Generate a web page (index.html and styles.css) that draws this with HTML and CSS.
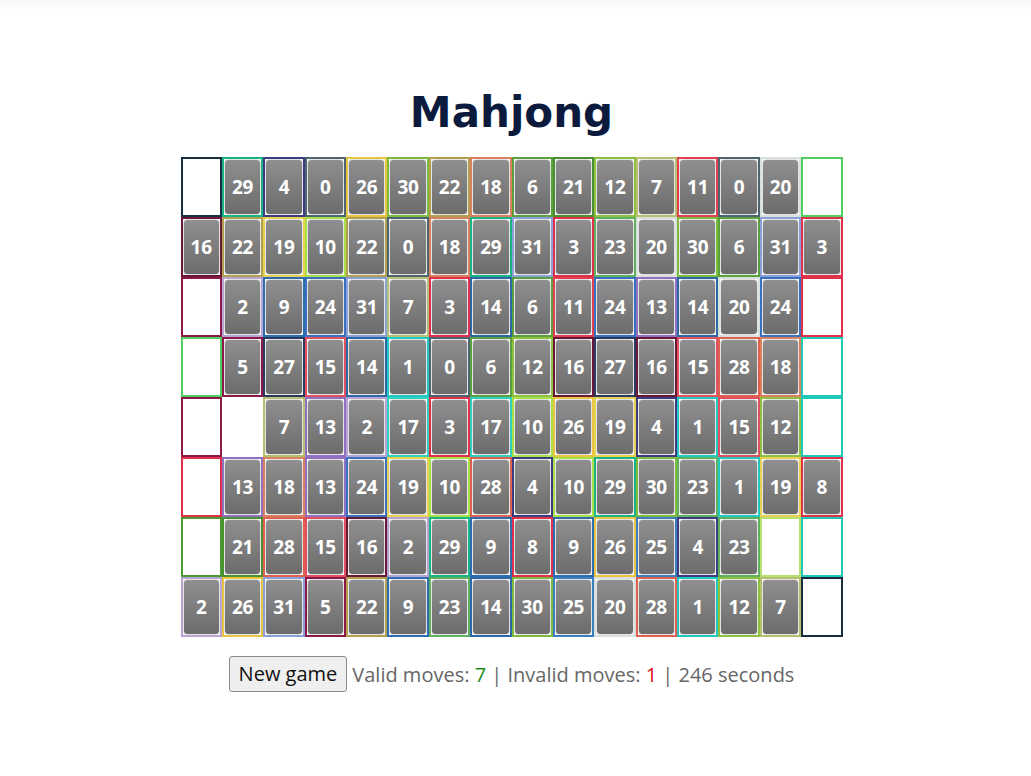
FILE: index.html
```html
<!DOCTYPE html>
<html lang="en">
<head>
<meta charset="utf-8">
<title>Mahjong</title>
<link rel="stylesheet" href="styles.css">
</head>
<body>
<div class="topshade"></div>
<main class="page">
  <h1 class="title">Mahjong</h1>
  <div class="board">
    <!-- row 1 -->
    <div class="cell e-navy"></div>
    <div class="cell n29"><div class="tile">29</div></div>
    <div class="cell n4"><div class="tile">4</div></div>
    <div class="cell n0"><div class="tile">0</div></div>
    <div class="cell n26"><div class="tile">26</div></div>
    <div class="cell n30"><div class="tile">30</div></div>
    <div class="cell n22"><div class="tile">22</div></div>
    <div class="cell n18"><div class="tile">18</div></div>
    <div class="cell n6"><div class="tile">6</div></div>
    <div class="cell n21"><div class="tile">21</div></div>
    <div class="cell n12"><div class="tile">12</div></div>
    <div class="cell n7"><div class="tile">7</div></div>
    <div class="cell n11"><div class="tile">11</div></div>
    <div class="cell n0"><div class="tile">0</div></div>
    <div class="cell n20"><div class="tile">20</div></div>
    <div class="cell e-green"></div>
    <!-- row 2 -->
    <div class="cell n16"><div class="tile">16</div></div>
    <div class="cell n22"><div class="tile">22</div></div>
    <div class="cell n19"><div class="tile">19</div></div>
    <div class="cell n10"><div class="tile">10</div></div>
    <div class="cell n22"><div class="tile">22</div></div>
    <div class="cell n0"><div class="tile">0</div></div>
    <div class="cell n18"><div class="tile">18</div></div>
    <div class="cell n29"><div class="tile">29</div></div>
    <div class="cell n31"><div class="tile">31</div></div>
    <div class="cell n3"><div class="tile">3</div></div>
    <div class="cell n23"><div class="tile">23</div></div>
    <div class="cell n20"><div class="tile">20</div></div>
    <div class="cell n30"><div class="tile">30</div></div>
    <div class="cell n6"><div class="tile">6</div></div>
    <div class="cell n31"><div class="tile">31</div></div>
    <div class="cell n3"><div class="tile">3</div></div>
    <!-- row 3 -->
    <div class="cell e-maroon"></div>
    <div class="cell n2"><div class="tile">2</div></div>
    <div class="cell n9"><div class="tile">9</div></div>
    <div class="cell n24"><div class="tile">24</div></div>
    <div class="cell n31"><div class="tile">31</div></div>
    <div class="cell n7"><div class="tile">7</div></div>
    <div class="cell n3"><div class="tile">3</div></div>
    <div class="cell n14"><div class="tile">14</div></div>
    <div class="cell n6"><div class="tile">6</div></div>
    <div class="cell n11"><div class="tile">11</div></div>
    <div class="cell n24"><div class="tile">24</div></div>
    <div class="cell n13"><div class="tile">13</div></div>
    <div class="cell n14"><div class="tile">14</div></div>
    <div class="cell n20"><div class="tile">20</div></div>
    <div class="cell n24"><div class="tile">24</div></div>
    <div class="cell e-red"></div>
    <!-- row 4 -->
    <div class="cell e-green"></div>
    <div class="cell n5"><div class="tile">5</div></div>
    <div class="cell n27"><div class="tile">27</div></div>
    <div class="cell n15"><div class="tile">15</div></div>
    <div class="cell n14"><div class="tile">14</div></div>
    <div class="cell n1"><div class="tile">1</div></div>
    <div class="cell n0"><div class="tile">0</div></div>
    <div class="cell n6"><div class="tile">6</div></div>
    <div class="cell n12"><div class="tile">12</div></div>
    <div class="cell n16"><div class="tile">16</div></div>
    <div class="cell n27"><div class="tile">27</div></div>
    <div class="cell n16"><div class="tile">16</div></div>
    <div class="cell n15"><div class="tile">15</div></div>
    <div class="cell n28"><div class="tile">28</div></div>
    <div class="cell n18"><div class="tile">18</div></div>
    <div class="cell e-teal"></div>
    <!-- row 5 -->
    <div class="cell e-maroon"></div>
    <div class="cell e-none"></div>
    <div class="cell n7"><div class="tile">7</div></div>
    <div class="cell n13"><div class="tile">13</div></div>
    <div class="cell n2"><div class="tile">2</div></div>
    <div class="cell n17"><div class="tile">17</div></div>
    <div class="cell n3"><div class="tile">3</div></div>
    <div class="cell n17"><div class="tile">17</div></div>
    <div class="cell n10"><div class="tile">10</div></div>
    <div class="cell n26"><div class="tile">26</div></div>
    <div class="cell n19"><div class="tile">19</div></div>
    <div class="cell n4"><div class="tile">4</div></div>
    <div class="cell n1"><div class="tile">1</div></div>
    <div class="cell n15"><div class="tile">15</div></div>
    <div class="cell n12"><div class="tile">12</div></div>
    <div class="cell e-teal"></div>
    <!-- row 6 -->
    <div class="cell e-red"></div>
    <div class="cell n13"><div class="tile">13</div></div>
    <div class="cell n18"><div class="tile">18</div></div>
    <div class="cell n13"><div class="tile">13</div></div>
    <div class="cell n24"><div class="tile">24</div></div>
    <div class="cell n19"><div class="tile">19</div></div>
    <div class="cell n10"><div class="tile">10</div></div>
    <div class="cell n28"><div class="tile">28</div></div>
    <div class="cell n4"><div class="tile">4</div></div>
    <div class="cell n10"><div class="tile">10</div></div>
    <div class="cell n29"><div class="tile">29</div></div>
    <div class="cell n30"><div class="tile">30</div></div>
    <div class="cell n23"><div class="tile">23</div></div>
    <div class="cell n1"><div class="tile">1</div></div>
    <div class="cell n19"><div class="tile">19</div></div>
    <div class="cell n8"><div class="tile">8</div></div>
    <!-- row 7 -->
    <div class="cell e-dkgreen"></div>
    <div class="cell n21"><div class="tile">21</div></div>
    <div class="cell n28"><div class="tile">28</div></div>
    <div class="cell n15"><div class="tile">15</div></div>
    <div class="cell n16"><div class="tile">16</div></div>
    <div class="cell n2"><div class="tile">2</div></div>
    <div class="cell n29"><div class="tile">29</div></div>
    <div class="cell n9"><div class="tile">9</div></div>
    <div class="cell n8"><div class="tile">8</div></div>
    <div class="cell n9"><div class="tile">9</div></div>
    <div class="cell n26"><div class="tile">26</div></div>
    <div class="cell n25"><div class="tile">25</div></div>
    <div class="cell n4"><div class="tile">4</div></div>
    <div class="cell n23"><div class="tile">23</div></div>
    <div class="cell e-lime"></div>
    <div class="cell e-teal"></div>
    <!-- row 8 -->
    <div class="cell n2"><div class="tile">2</div></div>
    <div class="cell n26"><div class="tile">26</div></div>
    <div class="cell n31"><div class="tile">31</div></div>
    <div class="cell n5"><div class="tile">5</div></div>
    <div class="cell n22"><div class="tile">22</div></div>
    <div class="cell n9"><div class="tile">9</div></div>
    <div class="cell n23"><div class="tile">23</div></div>
    <div class="cell n14"><div class="tile">14</div></div>
    <div class="cell n30"><div class="tile">30</div></div>
    <div class="cell n25"><div class="tile">25</div></div>
    <div class="cell n20"><div class="tile">20</div></div>
    <div class="cell n28"><div class="tile">28</div></div>
    <div class="cell n1"><div class="tile">1</div></div>
    <div class="cell n12"><div class="tile">12</div></div>
    <div class="cell n7"><div class="tile">7</div></div>
    <div class="cell e-navy"></div>
  </div>
  <div class="status">
    <button class="btn" type="button">New game</button>
    <span class="stats">Valid moves: <span class="good">7</span> | Invalid moves: <span class="bad">1</span> | 246 seconds</span>
  </div>
</main>
</body>
</html>
```

FILE: styles.css
```css
html, body {
  margin: 0;
  padding: 0;
  background: #ffffff;
}

body {
  font-family: "Open Sans", "Noto Sans", sans-serif;
  position: relative;
}

.topshade {
  position: absolute;
  left: 0;
  right: 0;
  top: 0;
  height: 10px;
  background: linear-gradient(#f6f6f6, #ffffff);
}

.page {
  display: flex;
  flex-direction: column;
  align-items: center;
  padding: 88px 8px 0 0;
}

.title {
  margin: 0 0 19px;
  font-family: "DejaVu Sans", "Open Sans", sans-serif;
  font-weight: 700;
  font-size: 42px;
  line-height: 50px;
  color: #0b1a3d;
}

.board {
  display: grid;
  grid-template-columns: repeat(16, 1fr);
  grid-auto-rows: 60px;
  width: 662px;
}

.cell {
  box-sizing: border-box;
  border: 2px solid transparent;
  display: flex;
}

.tile {
  flex: 1;
  box-sizing: border-box;
  border: 1px solid #e4e4e4;
  border-radius: 4px;
  background: linear-gradient(#8f8f8f, #6c6c6c);
  color: #ffffff;
  font-weight: 700;
  font-size: 19px;
  display: flex;
  align-items: center;
  justify-content: center;
  letter-spacing: -0.3px;
}

.status {
  margin-top: 19px;
  display: flex;
  align-items: center;
  gap: 5px;
  font-size: 20px;
  color: #666666;
}

.btn {
  font-family: "Open Sans", sans-serif;
  font-size: 20px;
  line-height: 26px;
  padding: 4px 9px;
  color: #111;
  background: #efefef;
  border: 1px solid #8a8a8a;
  border-radius: 3px;
}

.good { color: #1e8a1e; }
.bad { color: #e01010; }

/* colours of the removed-tile slots */
.e-navy { border-color: #183042; }
.e-green { border-color: #4fcf62; }
.e-maroon { border-color: #8c1848; }
.e-red { border-color: #e0304c; }
.e-teal { border-color: #20c8b8; }
.e-dkgreen { border-color: #4a9a30; }
.e-lime { border-color: #b8e070; }
.e-none { border-color: transparent; }

/* colour per tile value */
.n0 { border-color: #4e6470; }
.n1 { border-color: #20c8c0; }
.n2 { border-color: #b8a4d4; }
.n3 { border-color: #e0304c; }
.n4 { border-color: #3c3c80; }
.n5 { border-color: #8c1848; }
.n6 { border-color: #5aa03c; }
.n7 { border-color: #b8c070; }
.n8 { border-color: #e0304c; }
.n9 { border-color: #2c6cb0; }
.n10 { border-color: #a8e048; }
.n11 { border-color: #e04050; }
.n12 { border-color: #90c040; }
.n13 { border-color: #9070c0; }
.n14 { border-color: #2c68a8; }
.n15 { border-color: #e05060; }
.n16 { border-color: #6a1838; }
.n17 { border-color: #30d0c0; }
.n18 { border-color: #d9805f; }
.n19 { border-color: #e8d050; }
.n20 { border-color: #d8e0dc; }
.n21 { border-color: #4a9030; }
.n22 { border-color: #b0a050; }
.n23 { border-color: #60b060; }
.n24 { border-color: #3a70c0; }
.n25 { border-color: #3a80c0; }
.n26 { border-color: #e8c440; }
.n27 { border-color: #2a3a60; }
.n28 { border-color: #e06050; }
.n29 { border-color: #1ab386; }
.n30 { border-color: #7dbb3c; }
.n31 { border-color: #8aa0d8; }
```
